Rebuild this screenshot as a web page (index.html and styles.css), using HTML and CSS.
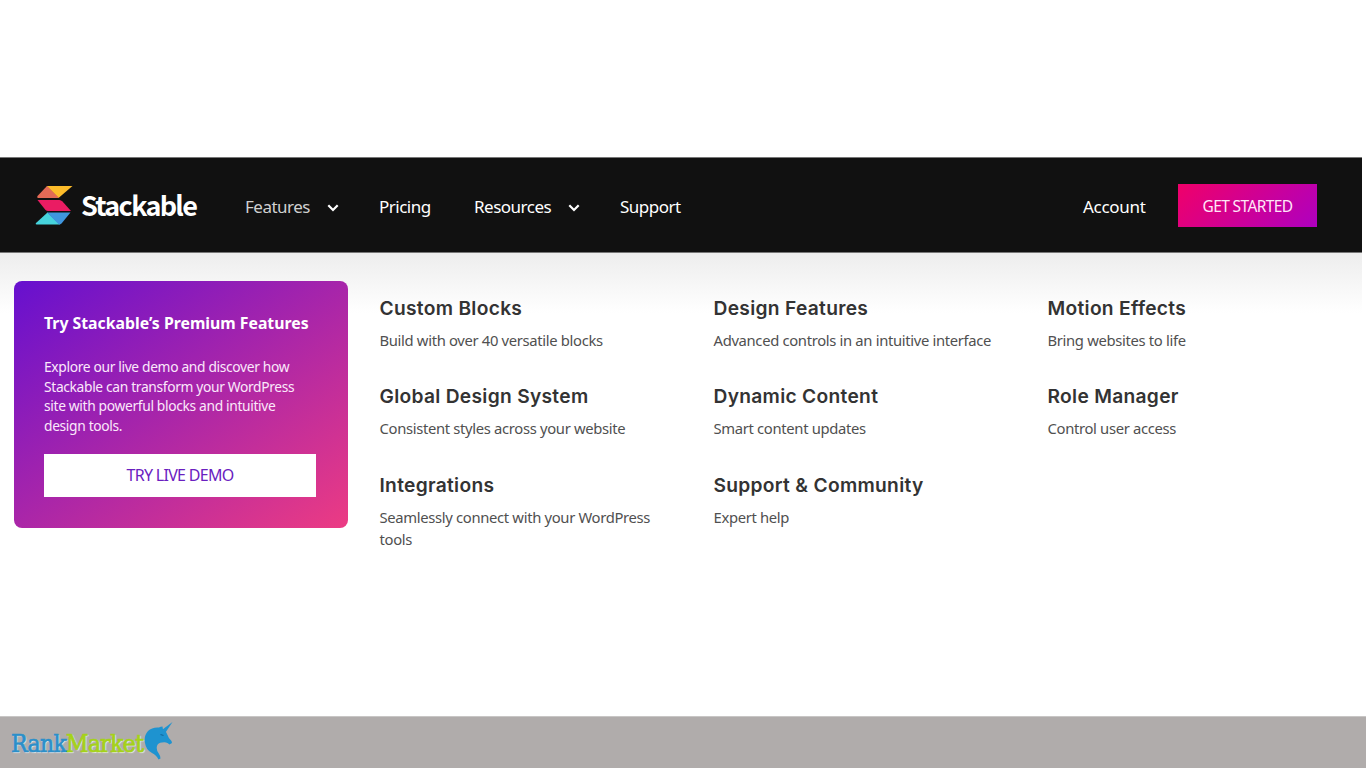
FILE: index.html
```
<!DOCTYPE html>
<html lang="en">
<head>
  <meta charset="UTF-8">
  <meta name="viewport" content="width=device-width, initial-scale=1.0">
  <title>Stackable</title>
  <link rel="stylesheet" href="styles.css">
</head>
<body>
  <div class="page">
    <header class="navbar">
      <a class="logo">
        <svg width="38" height="40" viewBox="0 0 38 40">
          <path d="M11.5 1 L37.5 1 L23.5 13 Z" fill="#fdbc2a"/>
          <path d="M12 1 L24 13 L3 13 Q1.500 12.500 2.500 11 Z" fill="#e36a56"/>
          <path d="M2.500 15 L24.500 15 Q26 15 27.500 16.500 L36 26 L13 26 Q11.500 26 10.500 25 Z" fill="#ea1c63"/>
          <path d="M12.500 27.500 L25 39.500 L1.500 39.500 Q0 39 1 38 Z" fill="#46d3dc"/>
          <path d="M12 27.500 L35.500 27.500 L26.500 38.500 Q25.500 39.500 24 39.500 Z" fill="#3f96de"/>
        </svg>
        <span class="logo-text">Stackable</span>
      </a>
      <nav class="menu">
        <a class="features active">Features
          <svg class="arrow" width="12" height="8" viewBox="0 0 12 8"><path d="M1.300 1.300 L6 6 L10.700 1.300"/></svg>
        </a>
        <a class="pricing">Pricing</a>
        <a class="resources">Resources
          <svg class="arrow" width="12" height="8" viewBox="0 0 12 8"><path d="M1.300 1.300 L6 6 L10.700 1.300"/></svg>
        </a>
        <a class="support">Support</a>
      </nav>
      <a class="account">Account</a>
      <a class="get-started">GET STARTED</a>
    </header>

    <main class="mega-menu">
      <div class="card">
        <h2>Try Stackable’s Premium Features</h2>
        <p>Explore our live demo and discover how<br>Stackable can transform your WordPress<br>site with powerful blocks and intuitive<br>design tools.</p>
        <a class="demo">TRY LIVE DEMO</a>
      </div>
      <div class="links">
        <div class="item"><h3>Custom Blocks</h3><p>Build with over 40 versatile blocks</p></div>
        <div class="item"><h3>Design Features</h3><p>Advanced controls in an intuitive interface</p></div>
        <div class="item"><h3>Motion Effects</h3><p>Bring websites to life</p></div>
        <div class="item"><h3>Global Design System</h3><p>Consistent styles across your website</p></div>
        <div class="item"><h3>Dynamic Content</h3><p>Smart content updates</p></div>
        <div class="item"><h3>Role Manager</h3><p>Control user access</p></div>
        <div class="item"><h3>Integrations</h3><p>Seamlessly connect with your WordPress<br>tools</p></div>
        <div class="item"><h3>Support &amp; Community</h3><p>Expert help</p></div>
      </div>
    </main>
  </div>

  <footer class="footer">
    <span class="brand"><span class="rank">Rank</span><span class="market">Market</span></span>
    <svg class="unicorn" width="30" height="40" viewBox="0 0 30 40">
      <path d="M28.500 1 L18.500 8.500 L21.500 11.500 Z" fill="#1e93d0"/>
      <path d="M18.500 5.500 Q16.500 5.500 15 6.500 Q8 6 4 10 Q-0.500 15 1 22 Q2 29 8 32 Q12.500 34 14.500 38.500 L16.500 37.500 Q16.500 35 14.500 32 Q12 28.500 13 25 Q14 21.500 18 21.500 Q21.500 21 23.500 22 L25.500 23.500 L28 22 L27.500 20 Q24.500 17.500 23.500 14 Q22.500 10.500 19 8.500 Z" fill="#1e93d0"/>
      <path d="M16.500 13.500 L19.500 14.500" stroke="#12689c" stroke-width="1.2"/>
    </svg>
  </footer>
</body>
</html>
```
FILE: styles.css
```
*{
  box-sizing: border-box;
}
body{
  margin: 0;
  height: 768px;
  display: flex;
  flex-direction: column;
  background-color: #fff;
  font-family: "Noto Sans", "Open Sans", sans-serif;
  overflow: hidden;
}
h2, h3, p{
  margin: 0;
}
.page{
  flex: 1;
  width: 1362px;
  padding-top: 157px;
}

/* navbar */
.navbar{
  display: flex;
  align-items: center;
  height: 96px;
  padding: 0 45px 0 35px;
  background-color: #111;
  border-top: 1px solid #777;
  border-bottom: 1px solid #777;
  color: #fff;
  font-size: 17px;
  letter-spacing: -0.5px;
}
.logo{
  display: flex;
  align-items: center;
  width: 210px;
}
.logo-text{
  margin-left: 8px;
  font-family: "Noto Sans CJK SC", sans-serif;
  font-size: 27px;
  font-weight: 700;
  line-height: 40px;
  letter-spacing: -1.7px;
}
.menu{
  display: flex;
  flex: 1;
  padding-top: 2px;
}
.menu a{
  display: flex;
  align-items: center;
  white-space: nowrap;
}
.features{
  width: 134px;
}
.pricing{
  width: 95px;
}
.resources{
  width: 146px;
}
.active{
  color: #d0d0d0;
}
.arrow{
  margin-left: 17px;
  margin-top: 3px;
  fill: none;
  stroke: #fff;
  stroke-width: 2.2;
}
.account{
  width: 95px;
  padding-top: 2px;
  letter-spacing: -0.3px;
}
.get-started{
  width: 139px;
  height: 43px;
  line-height: 44px;
  text-align: center;
  font-size: 15.5px;
  letter-spacing: -0.6px;
  color: #ffe6f8;
  background: linear-gradient(135deg, #f00069, #ae00c0);
}

/* dropdown */
.mega-menu{
  display: flex;
  height: 300px;
  padding: 28px 0 0 14px;
  background: linear-gradient(#ededed, #fff 60px);
}
.card{
  flex: none;
  width: 334px;
  height: 247px;
  padding: 31px 32px 0 30px;
  border-radius: 8px;
  background: linear-gradient(145deg, #6610cf, #ec3b83);
  color: #fff;
}
.card h2{
  font-size: 15.8px;
  line-height: 22px;
  white-space: nowrap;
}
.card p{
  margin-top: 23px;
  font-size: 13.8px;
  line-height: 19.6px;
  letter-spacing: -0.34px;
  color: #fbe8fb;
  white-space: nowrap;
}
.demo{
  display: block;
  margin-top: 18.6px;
  height: 43px;
  line-height: 43px;
  text-align: center;
  background-color: #fff;
  color: #6a20c0;
  font-size: 16px;
  letter-spacing: -0.7px;
}
.links{
  display: grid;
  flex: none;
  grid-template-columns: repeat(3, 334px);
  grid-auto-rows: 88.4px;
  margin: 14px 0 0 31.5px;
}
.item h3{
  font-family: Inter, sans-serif;
  font-size: 19.2px;
  font-weight: 600;
  line-height: 26px;
  letter-spacing: 0.3px;
  color: #333;
  white-space: nowrap;
}
.item p{
  margin-top: 8px;
  font-size: 14.8px;
  line-height: 22px;
  letter-spacing: -0.33px;
  color: #505050;
  white-space: nowrap;
}

/* footer */
.footer{
  display: flex;
  align-items: center;
  height: 52px;
  padding-left: 11px;
  border-top: 1px solid #c8c6c5;
  background-color: #b0acab;
}
.brand{
  width: 133px;
  padding-top: 2px;
  font-family: "DejaVu Serif Condensed", "DejaVu Serif", serif;
  font-size: 24.5px;
  letter-spacing: -0.7px;
  white-space: nowrap;
  text-shadow: 1px 1px 1px #eee;
}
.rank{
  color: #2b8fc9;
  -webkit-text-stroke: 0.7px #2b8fc9;
}
.market{
  color: #a5d219;
  -webkit-text-stroke: 0.7px #a5d219;
}
.unicorn{
  margin-bottom: 3px;
}
```
